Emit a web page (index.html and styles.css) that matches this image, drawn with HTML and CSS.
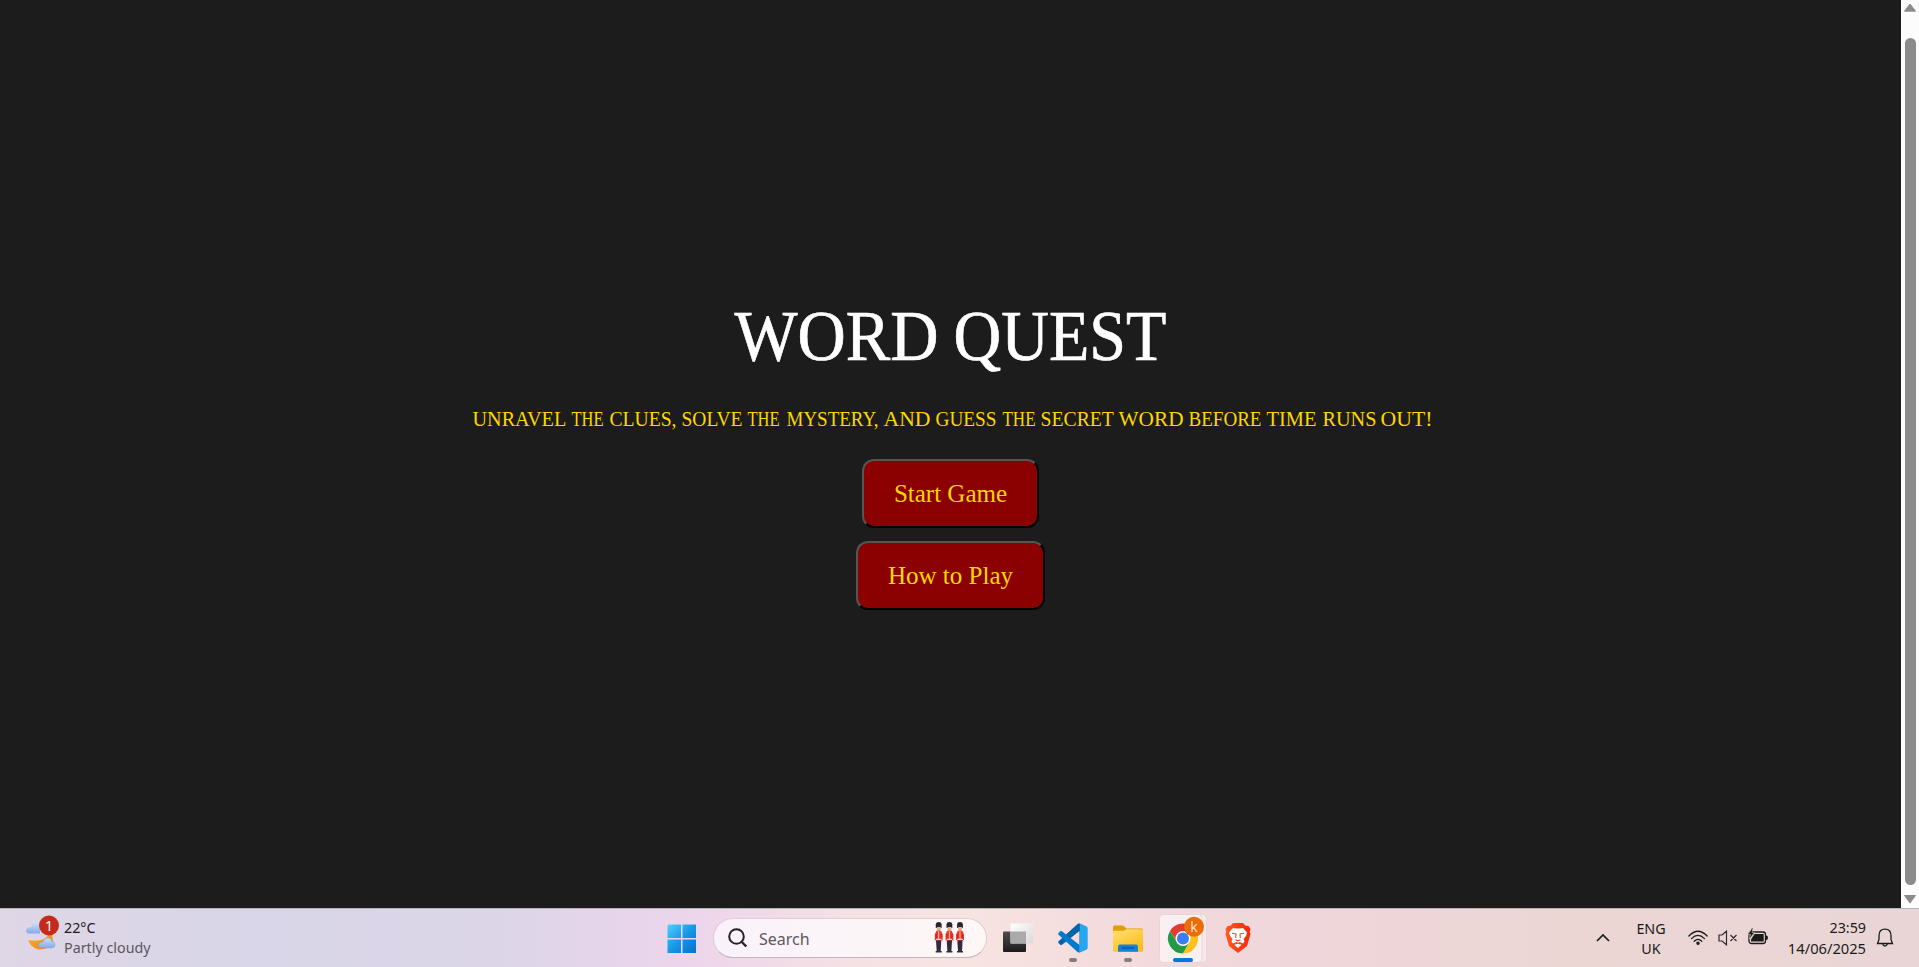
FILE: index.html
```
<!DOCTYPE html>
<html lang="en">
<head>
<meta charset="utf-8">
<title>Word Quest</title>
<link rel="stylesheet" href="styles.css">
</head>
<body>
<div class="screen">
  <div class="viewport">
    <main class="game">
      <h1 class="title"><svg width="432" height="76" viewBox="734.5 298 432 76"><text y="359.500"><tspan x="734" textLength="204" lengthAdjust="spacingAndGlyphs">WORD</tspan> <tspan x="953" textLength="213" lengthAdjust="spacingAndGlyphs">QUEST</tspan></text></svg></h1>
      <p class="tagline"><svg width="958" height="29" viewBox="471.5 0 958 29"><text y="21.300"><tspan x="472" textLength="93" lengthAdjust="spacingAndGlyphs">UNRAVEL</tspan> <tspan x="571" textLength="32" lengthAdjust="spacingAndGlyphs">THE</tspan> <tspan x="609" textLength="67" lengthAdjust="spacingAndGlyphs">CLUES,</tspan> <tspan x="681" textLength="61" lengthAdjust="spacingAndGlyphs">SOLVE</tspan> <tspan x="747" textLength="32" lengthAdjust="spacingAndGlyphs">THE</tspan> <tspan x="786" textLength="92" lengthAdjust="spacingAndGlyphs">MYSTERY,</tspan> <tspan x="883" textLength="47" lengthAdjust="spacingAndGlyphs">AND</tspan> <tspan x="935" textLength="61" lengthAdjust="spacingAndGlyphs">GUESS</tspan> <tspan x="1002" textLength="33" lengthAdjust="spacingAndGlyphs">THE</tspan> <tspan x="1040" textLength="73" lengthAdjust="spacingAndGlyphs">SECRET</tspan> <tspan x="1118" textLength="65" lengthAdjust="spacingAndGlyphs">WORD</tspan> <tspan x="1188" textLength="73" lengthAdjust="spacingAndGlyphs">BEFORE</tspan> <tspan x="1266" textLength="50" lengthAdjust="spacingAndGlyphs">TIME</tspan> <tspan x="1322" textLength="54" lengthAdjust="spacingAndGlyphs">RUNS</tspan> <tspan x="1380" textLength="52" lengthAdjust="spacingAndGlyphs">OUT!</tspan></text></svg></p>
      <button class="btn">Start Game</button>
      <button class="btn">How to Play</button>
    </main>
    <div class="scrollbar">
      <svg class="arrow" width="14" height="10" viewBox="0 0 14 10"><path d="M7 1 12.500 8.200H1.500Z" fill="#8b8b8b" stroke="#8b8b8b" stroke-linejoin="round"/></svg>
      <div class="thumb"></div>
      <svg class="arrow" width="14" height="10" viewBox="0 0 14 10"><path d="M7 9 12.500 1.500H1.500Z" fill="#8b8b8b" stroke="#8b8b8b" stroke-linejoin="round"/></svg>
    </div>
  </div>

  <footer class="taskbar">
    <div class="weather">
      <svg width="36" height="38" viewBox="0 0 36 38">
        <defs><linearGradient id="cl" x2="0" y2="1"><stop stop-color="#c9def8"/><stop offset="1" stop-color="#86abe8"/></linearGradient>
        <linearGradient id="mn" x2="1" y2="1"><stop stop-color="#f8b62c"/><stop offset="1" stop-color="#ee7d16"/></linearGradient></defs>
        <path d="M5 19.500H16V10.500Q14 8 11 9Q8 9.500 7.500 13Q2 13 2 16.500Q2 19.500 5 19.500Z" fill="url(#cl)"/>
        <path d="M25 20Q20 29 4 26Q7 34 15 35.500Q24 36 29 28L28 19Z" fill="url(#mn)"/>
        <path d="M17 34H28Q31.500 33.500 31 30Q30.500 27.500 28 27.500Q27 23.500 23 24Q20 24 19 28Q14.500 28 14.500 31Q14.500 34 17 34Z" fill="url(#cl)" stroke="#7da3df" stroke-width=".5"/>
        <circle cx="25" cy="11.500" r="10" fill="#c42b1c"/>
        <text x="25" y="16.500" class="badge-num">1</text>
      </svg>
      <div class="lines"><span class="temp">22°C</span><span class="cond">Partly cloudy</span></div>
    </div>

    <div class="apps">
      <svg class="start" width="30" height="30" viewBox="0 0 30 30">
        <defs><linearGradient id="wn" x2="1" y2="1"><stop stop-color="#4fd0ff"/><stop offset=".5" stop-color="#1797e4"/><stop offset="1" stop-color="#0571cf"/></linearGradient></defs>
        <path d="M1.500.500H14V14H.500V1.500ZM15.500.500H29V14H15.500ZM.500 15.500H14V29H.500ZM15.500 15.500H29V29H15.500Z" fill="url(#wn)"/>
      </svg>
      <div class="search">
        <svg width="22" height="22" viewBox="0 0 22 22" fill="none" stroke="#222" stroke-width="2"><circle cx="9.500" cy="9.500" r="7.300"/><path d="m14.800 15 4.500 4.500" stroke-width="2.400"/></svg>
        <span class="placeholder">Search</span>
        <svg class="guards" width="31" height="34" viewBox="0 0 31 34">
          <defs><g id="guard">
            <path d="M1.800 7V3.200Q2 1 4.700 1T7.600 3.200V7Z" fill="#2a2433"/>
            <path d="M2.800 6H6.800V9H2.800Z" fill="#e5b18c"/>
            <path d="M2.300 10Q4.700 8.500 7.100 10L8.700 13.500V20H.800V13.500Z" fill="#e8392c"/>
            <path d="M2.300 13V19M7.200 13V19" stroke="#a02125" stroke-width=".7"/>
            <path d="M4.700 10V18" stroke="#ffd8bd" stroke-width=".8"/>
            <path d="M2 18.300H7.500" stroke="#fff"/>
            <path d="M2 19.500H7.300L6.700 30H7.700V31.500H1.700V30H2.700Z" fill="#302b3e"/>
            <path d="M.500 19H2V21H.500ZM7.500 19H9V21H7.500Z" fill="#efd9d2"/>
          </g></defs>
          <use href="#guard"/><use href="#guard" x="10.700"/><use href="#guard" x="21.300"/>
        </svg>
      </div>
      <div class="app">
        <svg width="32" height="30" viewBox="0 0 32 30">
          <defs><linearGradient id="tk" x2="0" y2="1"><stop stop-color="#4d4d4d"/><stop offset="1" stop-color="#1b1b1b"/></linearGradient>
          <linearGradient id="tw" x2="1" y2="1"><stop stop-color="#fff"/><stop offset="1" stop-color="#d9d9d9"/></linearGradient></defs>
          <rect x="1" y="8.500" width="23" height="20.500" rx="1" fill="url(#tk)"/>
          <rect x="8.500" y=".500" width="22.500" height="20" rx="1" fill="url(#tw)"/>
          <path d="M8.500 8.500H24V20.500H8.500Z" fill="#aaa"/>
        </svg>
      </div>
      <div class="app">
        <svg width="30" height="30" viewBox="0 0 30 30">
          <path d="M21.500.500 29 4V26L21.500 29.500V8L4 21.800Q3 22.300 2.200 21.700L.500 20Q-.200 19 .600 18.200L19 1.500Q20 .200 21.500.500Z" fill="#0065a9"/>
          <path d="M2.200 8.300Q3 7.700 4 8.200L21.500 22V29.500Q20 29.600 19 28.600L.600 11.800Q-.200 11 .500 10Z" fill="#007acc"/>
          <path d="M21 .300 28.500 3.500Q29.700 4 29.700 5.500V24.500Q29.700 26 28.500 26.500L21 29.700Q21.800 29.200 21.800 28V2Q21.800.800 21 .300Z" fill="#27a6f2"/>
        </svg>
        <i class="dot"></i>
      </div>
      <div class="app folder">
        <svg width="30" height="28" viewBox="0 0 30 28">
          <defs><linearGradient id="fo" x2=".6" y2="1"><stop stop-color="#ffe071"/><stop offset="1" stop-color="#fbbd1c"/></linearGradient></defs>
          <path d="M0 2Q0 .500 1.500.500H10L13.500 3.500H28.500Q30 3.500 30 5V12H0Z" fill="#dfa006"/>
          <path d="M0 7Q0 5.700 1.500 5.700H10.500L13.500 4.200H28.500Q30 4.200 30 5.700V26.700H1.500Q0 26.700 0 25.500Z" fill="url(#fo)"/>
          <path d="M5 26.700V21.500Q5 19.500 7 19.500H23Q25 19.500 25 21.500V26.700Z" fill="#1680d8"/>
          <path d="M8.500 23H21.500" stroke="#0a4f9c" stroke-width="1.200"/>
        </svg>
        <i class="dot"></i>
      </div>
      <div class="app active">
        <svg width="48" height="50" viewBox="0 0 48 50">
          <rect x="2" y=".500" width="45.500" height="48" rx="4" class="tile-back"/>
          <rect x=".500" y=".500" width="42.500" height="48" rx="4" class="tile"/>
          <g transform="translate(24 24.500)">
            <path d="M-13-7.500A15 15 0 0 1 13-7.500L0-6-6 3Z" fill="#e33b2e"/>
            <path d="M13-7.500A15 15 0 0 1 0 15L6.200 3.500 0-7.500Z" fill="#fcc21b"/>
            <path d="M0 15A15 15 0 0 1-13-7.500L-6 3.500 6.200 3.500Z" fill="#249a47"/>
            <circle r="7.500" fill="#fff"/><circle r="6" fill="#3a7df0"/>
          </g>
          <circle cx="35" cy="12.800" r="10" fill="#ee6c05"/>
          <text x="35" y="17.500" class="profile">k</text>
        </svg>
        <i class="dot wide"></i>
      </div>
      <div class="app">
        <svg width="26" height="30" viewBox="0 0 26 30">
          <defs><linearGradient id="br"><stop stop-color="#ff5a25"/><stop offset="1" stop-color="#fb2408"/></linearGradient></defs>
          <path d="M8 0H18L20.500 2.700 23.500 3 25.500 6 24.700 9 25.500 11 22 23 13 30 4 23 .500 11 1.300 9 .500 6 2.500 3 5.500 2.700Z" fill="url(#br)"/>
          <path d="M8 5 11 5.500H15L18 5 22 9.500 21 13 18.500 16 19.500 18.500 18 20.500 14.500 19 13 20 11.500 19 8 20.500 6.500 18.500 7.500 16 5 13 4 9.500Z" fill="#fff"/>
          <path d="M7 10.300 11 11 10.700 15M19 10.300 15 11 15.300 15M10.500 16.700 13 17.800 15.500 16.700" fill="none" stroke="#fb4520" stroke-width="1.100"/>
          <path d="M9.300 21.800 13 20.800 16.700 21.800 13 25Z" fill="#fff"/>
        </svg>
      </div>
    </div>

    <div class="tray">
      <svg class="chev" width="16" height="10" viewBox="0 0 16 10"><path d="m2 8 6-6 6 6" fill="none" stroke="#1b1b1b" stroke-width="1.700"/></svg>
      <div class="lang"><span>ENG</span><span>UK</span></div>
      <svg class="wifi" width="20" height="16" viewBox="0 0 20 16" fill="none" stroke="#1b1b1b" stroke-width="1.300" stroke-linecap="round"><path d="M.900 6Q10-3.500 19.100 6M3.500 8.600Q10 2 16.500 8.600M6.200 11.200Q10 7.500 13.800 11.200"/><circle cx="10" cy="13.300" r="1.100" fill="#1b1b1b"/></svg>
      <svg class="speaker" width="20" height="16" viewBox="0 0 20 16" fill="none" stroke="#2b2b2b" stroke-width="1.200"><path d="M1 5H4L8.500 1.200V14.800L4 11H1ZM12.500 5 18.500 11M18.500 5 12.500 11"/></svg>
      <svg class="battery" width="21" height="18" viewBox="0 0 21 18"><rect x="1" y="4" width="16.500" height="11.500" rx="2.500" fill="none" stroke="#1b1b1b" stroke-width="1.300"/><path d="M6.500 6H15.700V13.500H3V11.500Z" fill="#1b1b1b"/><path d="M18 7.500Q20 7.500 20 9.700T18 12Z" fill="#1b1b1b"/><path d="M4 0 0 6.500H2.500L1.500 11 6.500 4.500H4L5 0Z" fill="#1b1b1b" stroke="#ebd6d5" stroke-width=".5"/></svg>
      <div class="clock"><span>23:59</span><span class="date">14/06/2025</span></div>
      <svg class="bell" width="18" height="20" viewBox="0 0 18 20" fill="none" stroke="#1b1b1b" stroke-width="1.300"><path d="M3 7.500Q3 1.200 9 1.200T15 7.500V11.500L16.500 15.500H1.500L3 11.500ZM6.800 15.800Q7 18 9 18T11.200 15.800"/></svg>
    </div>
  </footer>
</div>
</body>
</html>
```
FILE: styles.css
```
* { box-sizing: border-box; }
body { margin: 0; overflow: hidden; }
svg { display: block; flex: none; }

.screen { width: 1919px; height: 967px; display: flex; flex-direction: column; }
.viewport { height: 908px; display: flex; background: #1c1c1c; }

.game {
  width: 1901px;
  padding-top: 298px;
  display: flex;
  flex-direction: column;
  align-items: center;
  font-family: "Liberation Serif", "Times New Roman", serif;
}
.title {
  margin: 0;
  height: 76px;
  font-size: 71px;
  font-weight: 400;
}
.title svg, .tagline svg { overflow: visible; }
.title text { fill: #fff; stroke: #fff; stroke-width: .7px; }
.tagline {
  margin: 31px 0 25px;
  height: 29px;
  font-size: 21.500px;
}
.tagline text { fill: #ffd700; }
.btn {
  height: 69px;
  margin: 0 0 13px;
  padding: 0 30px;
  font-family: inherit;
  font-size: 25px;
  color: #ffd700;
  background: #8b0000;
  border: 2px outset #000;
  border-radius: 12px;
}

.scrollbar {
  width: 18px;
  padding: 3px 0 4px;
  display: flex;
  flex-direction: column;
  align-items: center;
  background: #fcfcfc;
}
.thumb { width: 11px; height: 847px; margin: 25px 0 auto; border-radius: 6px; background: #8b8b8b; }

.taskbar {
  height: 59px;
  display: grid;
  grid-template-columns: 667px auto 1fr;
  border-top: 1px solid #b9b0b4;
  background: linear-gradient(90deg, #dfd6e6 0, #d8d6e8 13%, #dcd5e8 26%, #edd5ec 36%, #f5e0e4 44%, #f7e4e1 50%, #f3d9dc 60%, #efd6da 68%, #ecd6d4 82%, #ead5d6 100%);
  font-family: "Noto Sans", "Open Sans", sans-serif;
  font-size: 14.300px;
  color: #1b1b1b;
}
.weather { display: flex; padding: 5px 0 0 24px; gap: 4px; }
.lines, .lang, .clock { display: flex; flex-direction: column; line-height: 20px; white-space: nowrap; }
.lines { padding-top: 4px; }
.cond { color: #5b5761; }
.badge-num { font: 14px "Noto Sans", sans-serif; fill: #fff; text-anchor: middle; }
.profile { font: 14px "Noto Sans", sans-serif; fill: #ffe3cb; text-anchor: middle; }

.apps { display: flex; }
.start { margin: 15px 16px 0 0; }
.search {
  width: 274px;
  height: 40px;
  margin: 9px 3px 0 0;
  padding: 0 21px 0 13px;
  display: flex;
  align-items: center;
  border: 1px solid #e0cdd5;
  border-bottom-color: #c5b6b9;
  border-radius: 20px;
  background: linear-gradient(90deg, #faf2fa, #fdf7f6);
}
.placeholder { margin-left: 10px; padding-top: 1px; font-size: 16px; color: #5c585b; }
.guards { margin-left: auto; }
.app { position: relative; width: 55px; height: 58px; padding-top: 14px; display: flex; flex-direction: column; align-items: center; }
.folder { padding-top: 16px; }
.active { padding-top: 5px; }
.dot { position: absolute; top: 49px; width: 8px; height: 4px; border-radius: 2px; background: #857b80; }
.wide { width: 20px; background: #0078d4; }
.tile { fill: #faf0f2; stroke: #e3d2d6; stroke-width: .8; }
.tile-back { fill: #f7e9eb; stroke: #e3d2d6; stroke-width: .8; }

.tray { display: flex; justify-content: flex-end; padding-right: 25px; }
.chev { margin: 24px 24px 0 0; }
.lang { width: 32px; margin: 10px 21px 0 0; align-items: center; }
.wifi { margin: 21px 10px 0 0; }
.speaker { margin: 21px 10px 0 0; }
.battery { margin: 19px 0 0; }
.clock { width: 97px; margin: 9px 10px 0 0; align-items: flex-end; }
.date { font-size: 14.700px; }
.bell { margin-top: 19px; }
```
